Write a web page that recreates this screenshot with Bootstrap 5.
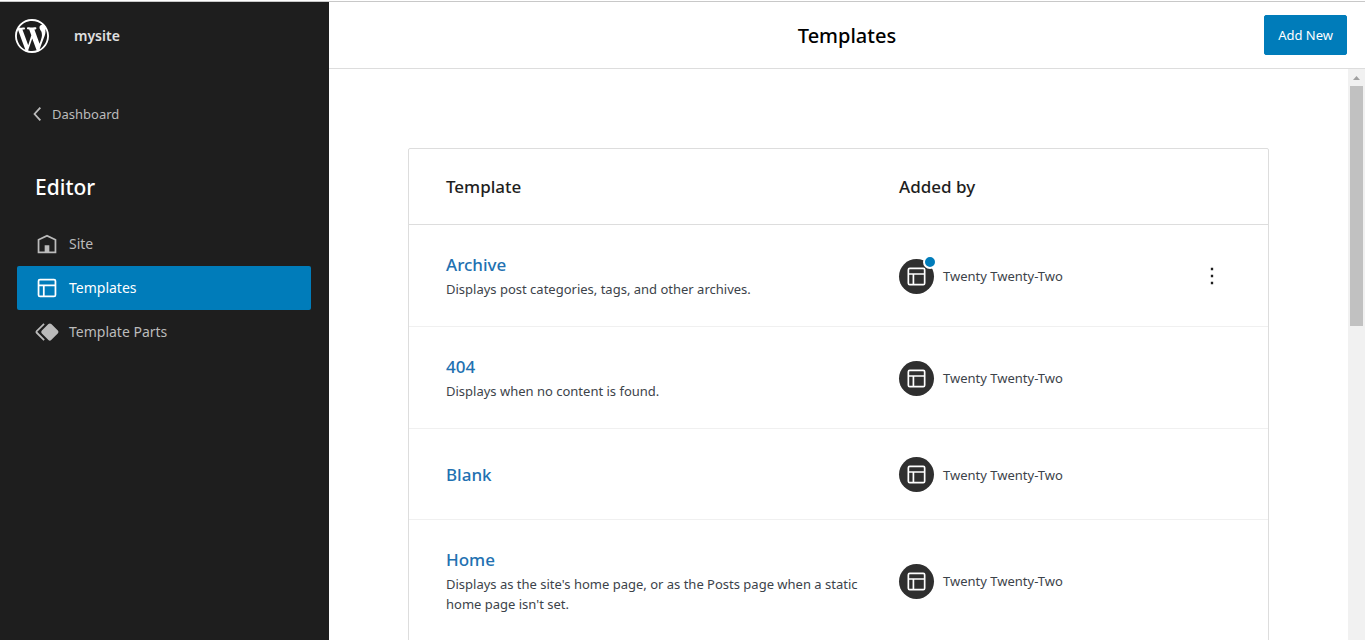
<!DOCTYPE html>
<html lang="en">
<head>
<meta charset="utf-8">
<meta name="viewport" content="width=device-width, initial-scale=1">
<title>Templates – mysite</title>
<link href="https://cdn.jsdelivr.net/npm/bootstrap@5.3.0/dist/css/bootstrap.min.css" rel="stylesheet">
<style>
  :root { --wp-blue: #007cba; --wp-dark: #1e1e1e; --wp-line: #ddd; }
  body { font-family: "Noto Sans", "Open Sans", sans-serif; font-size: 13px; line-height: 20px; color: var(--wp-dark); border-top: 1px solid #fff; }
  .app-frame { border-top: 1px solid #c8c8c8; }
  .side-panel { flex: 0 0 329px; background: var(--wp-dark); color: #bbb; padding-left: 17px; padding-right: 18px; }
  .side-panel a { color: inherit; text-decoration: none; }
  .site-bar { height: 68px; margin-left: -2px; gap: 25px; }
  .site-bar .site-name { color: #e0e0e0; font-size: 14px; font-weight: 600; }
  .back-link { margin: 30px 0 0 7px; height: 28px; }
  .side-heading { margin: 45px 0 21px 18px; font-size: 21px; line-height: 28px; font-weight: 500; color: #fff; }
  .side-nav .nav-link { height: 44px; padding: 0 16px; gap: 8px; border-radius: 2px; font-size: 14px; }
  .side-nav .nav-link.active { background: var(--wp-blue); color: #fff; }
  svg { fill: currentColor; flex: none; display: block; }
  .page-bar { height: 67px; border-bottom: 1px solid var(--wp-line); padding: 0 18px; }
  .page-bar h1 { font-size: 20px; line-height: 28px; font-weight: 500; color: #000; padding-top: 2px; }
  .btn-add { --bs-btn-color: #fff; --bs-btn-bg: var(--wp-blue); --bs-btn-border-color: var(--wp-blue); --bs-btn-hover-color: #fff; --bs-btn-hover-bg: #006ba1; height: 40px; padding: 2px 13px 0; border-radius: 2px; font-size: 13px; }
  .list-area { padding: 79px 79px 0; }
  .list-box { border: 1px solid var(--wp-line); border-radius: 2px; }
  .list-box table { width: 100%; table-layout: fixed; }
  .list-box th { height: 75px; padding: 2px 0 0 37px; font-size: 17px; font-weight: 500; border-bottom: 1px solid var(--wp-line); }
  .list-box td { height: 91px; padding: 28px 0 26px 37px; border-bottom: 1px solid #f0f0f0; vertical-align: middle; }
  .list-box .col-by { width: 197px; padding-left: 0; }
  .list-box .col-act { width: 172px; padding-left: 0; }
  .tpl-name { display: block; font-size: 17px; line-height: 24px; font-weight: 500; color: #2271b1; text-decoration: none; }
  .tpl-desc { margin: 2px 20px 1px 0; color: #3c434a; }
  .added { gap: 9px; color: #3c434a; }
  .avatar-dot { width: 35px; height: 35px; border-radius: 50%; background: #2f2f2f; color: #fff; flex: none; }
  .changed-dot { position: absolute; top: -4px; right: -3px; width: 14px; height: 14px; border-radius: 50%; background: var(--wp-blue); border: 2px solid #fff; }
  .btn-more { padding: 4px; border: 0; background: none; color: var(--wp-dark); margin-left: 98px; }
  .scroll-track { flex: 0 0 17px; background: #f1f1f1; padding: 0 2px; }
  .scroll-arrow { height: 17px; color: #a0a0a0; }
  .scroll-thumb { height: 42%; background: #c1c1c1; }
</style>
</head>
<body class="vh-100 overflow-hidden d-flex flex-column">
<svg class="d-none" aria-hidden="true">
  <symbol id="i-layout" viewBox="0 0 24 24"><path d="M18 5.5H6a.5.5 0 00-.5.5v3h13V6a.5.5 0 00-.5-.5zm.5 5H10v8h8a.5.5 0 00.5-.5v-7.5zm-10 0h-3V18a.5.5 0 00.5.5h2.5v-8zM6 4h12a2 2 0 012 2v12a2 2 0 01-2 2H6a2 2 0 01-2-2V6a2 2 0 012-2z"/></symbol>
</svg>
<div class="app-frame d-flex flex-grow-1 overflow-hidden">
  <aside class="side-panel">
    <div class="site-bar d-flex align-items-center">
      <a href="#" aria-label="Back to dashboard"><svg width="34" height="34" viewBox="0 0 20 20"><path d="M20 10c0-5.51-4.49-10-10-10C4.48 0 0 4.49 0 10c0 5.52 4.48 10 10 10 5.51 0 10-4.48 10-10zM7.78 15.37L4.37 6.22c.55-.02 1.17-.08 1.17-.08.5-.06.44-1.13-.06-1.11 0 0-1.45.11-2.37.11-.18 0-.37 0-.58-.01C4.12 2.69 6.87 1.11 10 1.11c2.33 0 4.45.87 6.05 2.34-.68-.11-1.65.39-1.65 1.58 0 .74.45 1.36.9 2.1.35.61.55 1.36.55 2.46 0 1.49-1.4 5-1.4 5l-3.03-8.37c.54-.02.82-.17.82-.17.5-.05.44-1.25-.06-1.22 0 0-1.44.12-2.38.12-.87 0-2.33-.12-2.33-.12-.5-.03-.56 1.2-.06 1.22l.92.08 1.26 3.41zM17.41 10c.24-.64.74-1.87.43-4.25.7 1.29 1.05 2.71 1.05 4.25 0 3.29-1.73 6.24-4.4 7.78.97-2.59 1.94-5.2 2.92-7.78zM6.1 18.09C3.12 16.65 1.11 13.53 1.11 10c0-1.3.23-2.48.72-3.59C3.25 10.3 4.67 14.2 6.1 18.09zm4.03-6.63l2.58 6.98c-.86.29-1.76.45-2.71.45-.79 0-1.57-.11-2.29-.33.81-2.38 1.62-4.74 2.42-7.1z" fill="#fff"/></svg></a>
      <span class="site-name">mysite</span>
    </div>
    <a href="#" class="back-link d-flex align-items-center"><svg width="28" height="28" viewBox="0 0 24 24"><path d="M14.6 7l-1.2-1L8 12l5.4 6 1.2-1-4.6-5z"/></svg>Dashboard</a>
    <h2 class="side-heading">Editor</h2>
    <nav class="side-nav nav flex-column">
      <a href="#" class="nav-link d-flex align-items-center"><svg width="28" height="28" viewBox="0 0 24 24"><path d="M12 4L4 7.9V20h16V7.9L12 4zm6.5 14.5H14V13h-4v5.5H5.5V8.8L12 5.7l6.5 3.1v9.7z"/></svg>Site</a>
      <a href="#" class="nav-link active d-flex align-items-center" aria-current="page"><svg width="28" height="28"><use href="#i-layout"/></svg>Templates</a>
      <a href="#" class="nav-link d-flex align-items-center"><svg width="28" height="28" viewBox="0 0 24 24"><path d="M21.3 10.8l-5.6-5.6c-.7-.7-1.8-.7-2.5 0l-5.6 5.6c-.7.7-.7 1.8 0 2.5l5.6 5.6c.3.3.8.5 1.2.5s.9-.2 1.2-.5l5.6-5.6c.8-.7.8-1.9.1-2.5zm-17.6 1L10 5.5l-1-1-6.3 6.3c-.7.7-.7 1.8 0 2.5L9 19.5l1.1-1.1-6.3-6.3c-.2 0-.2-.2-.1-.3z"/></svg>Template Parts</a>
    </nav>
  </aside>
  <div class="d-flex flex-column flex-grow-1 overflow-hidden">
    <header class="page-bar row g-0 align-items-center flex-shrink-0">
      <h1 class="col-4 offset-4 text-center mb-0">Templates</h1>
      <div class="col-4 text-end"><button type="button" class="btn btn-add">Add New</button></div>
    </header>
    <div class="d-flex flex-grow-1 overflow-hidden">
      <main class="list-area flex-grow-1 overflow-hidden">
        <div class="list-box">
          <table>
            <thead><tr><th scope="col">Template</th><th scope="col" class="col-by">Added by</th><th scope="col" class="col-act" aria-label="Actions"></th></tr></thead>
            <tbody>
              <tr>
                <td><a href="#" class="tpl-name">Archive</a><p class="tpl-desc">Displays post categories, tags, and other archives.</p></td>
                <td class="col-by"><div class="added d-flex align-items-center"><span class="avatar-dot position-relative d-flex align-items-center justify-content-center"><svg width="27" height="27"><use href="#i-layout"/></svg><span class="changed-dot"></span></span>Twenty Twenty-Two</div></td>
                <td class="col-act"><button type="button" class="btn-more" aria-label="Actions"><svg width="28" height="28" viewBox="0 0 24 24"><path d="M13 19h-2v-2h2v2zm0-6h-2v-2h2v2zm0-6h-2V5h2v2z"/></svg></button></td>
              </tr>
              <tr>
                <td><a href="#" class="tpl-name">404</a><p class="tpl-desc">Displays when no content is found.</p></td>
                <td class="col-by"><div class="added d-flex align-items-center"><span class="avatar-dot d-flex align-items-center justify-content-center"><svg width="27" height="27"><use href="#i-layout"/></svg></span>Twenty Twenty-Two</div></td>
                <td class="col-act"></td>
              </tr>
              <tr>
                <td><a href="#" class="tpl-name">Blank</a></td>
                <td class="col-by"><div class="added d-flex align-items-center"><span class="avatar-dot d-flex align-items-center justify-content-center"><svg width="27" height="27"><use href="#i-layout"/></svg></span>Twenty Twenty-Two</div></td>
                <td class="col-act"></td>
              </tr>
              <tr>
                <td><a href="#" class="tpl-name">Home</a><p class="tpl-desc">Displays as the site's home page, or as the Posts page when a static home page isn't set.</p></td>
                <td class="col-by"><div class="added d-flex align-items-center"><span class="avatar-dot d-flex align-items-center justify-content-center"><svg width="27" height="27"><use href="#i-layout"/></svg></span>Twenty Twenty-Two</div></td>
                <td class="col-act"></td>
              </tr>
            </tbody>
          </table>
        </div>
      </main>
      <div class="scroll-track" aria-hidden="true">
        <div class="scroll-arrow d-flex align-items-center justify-content-center"><svg width="7" height="4" viewBox="0 0 7 4"><path d="M0 4L3.500 0L7 4z"/></svg></div>
        <div class="scroll-thumb"></div>
      </div>
    </div>
  </div>
</div>
<script src="https://cdn.jsdelivr.net/npm/bootstrap@5.3.0/dist/js/bootstrap.bundle.min.js"></script>
</body>
</html>
